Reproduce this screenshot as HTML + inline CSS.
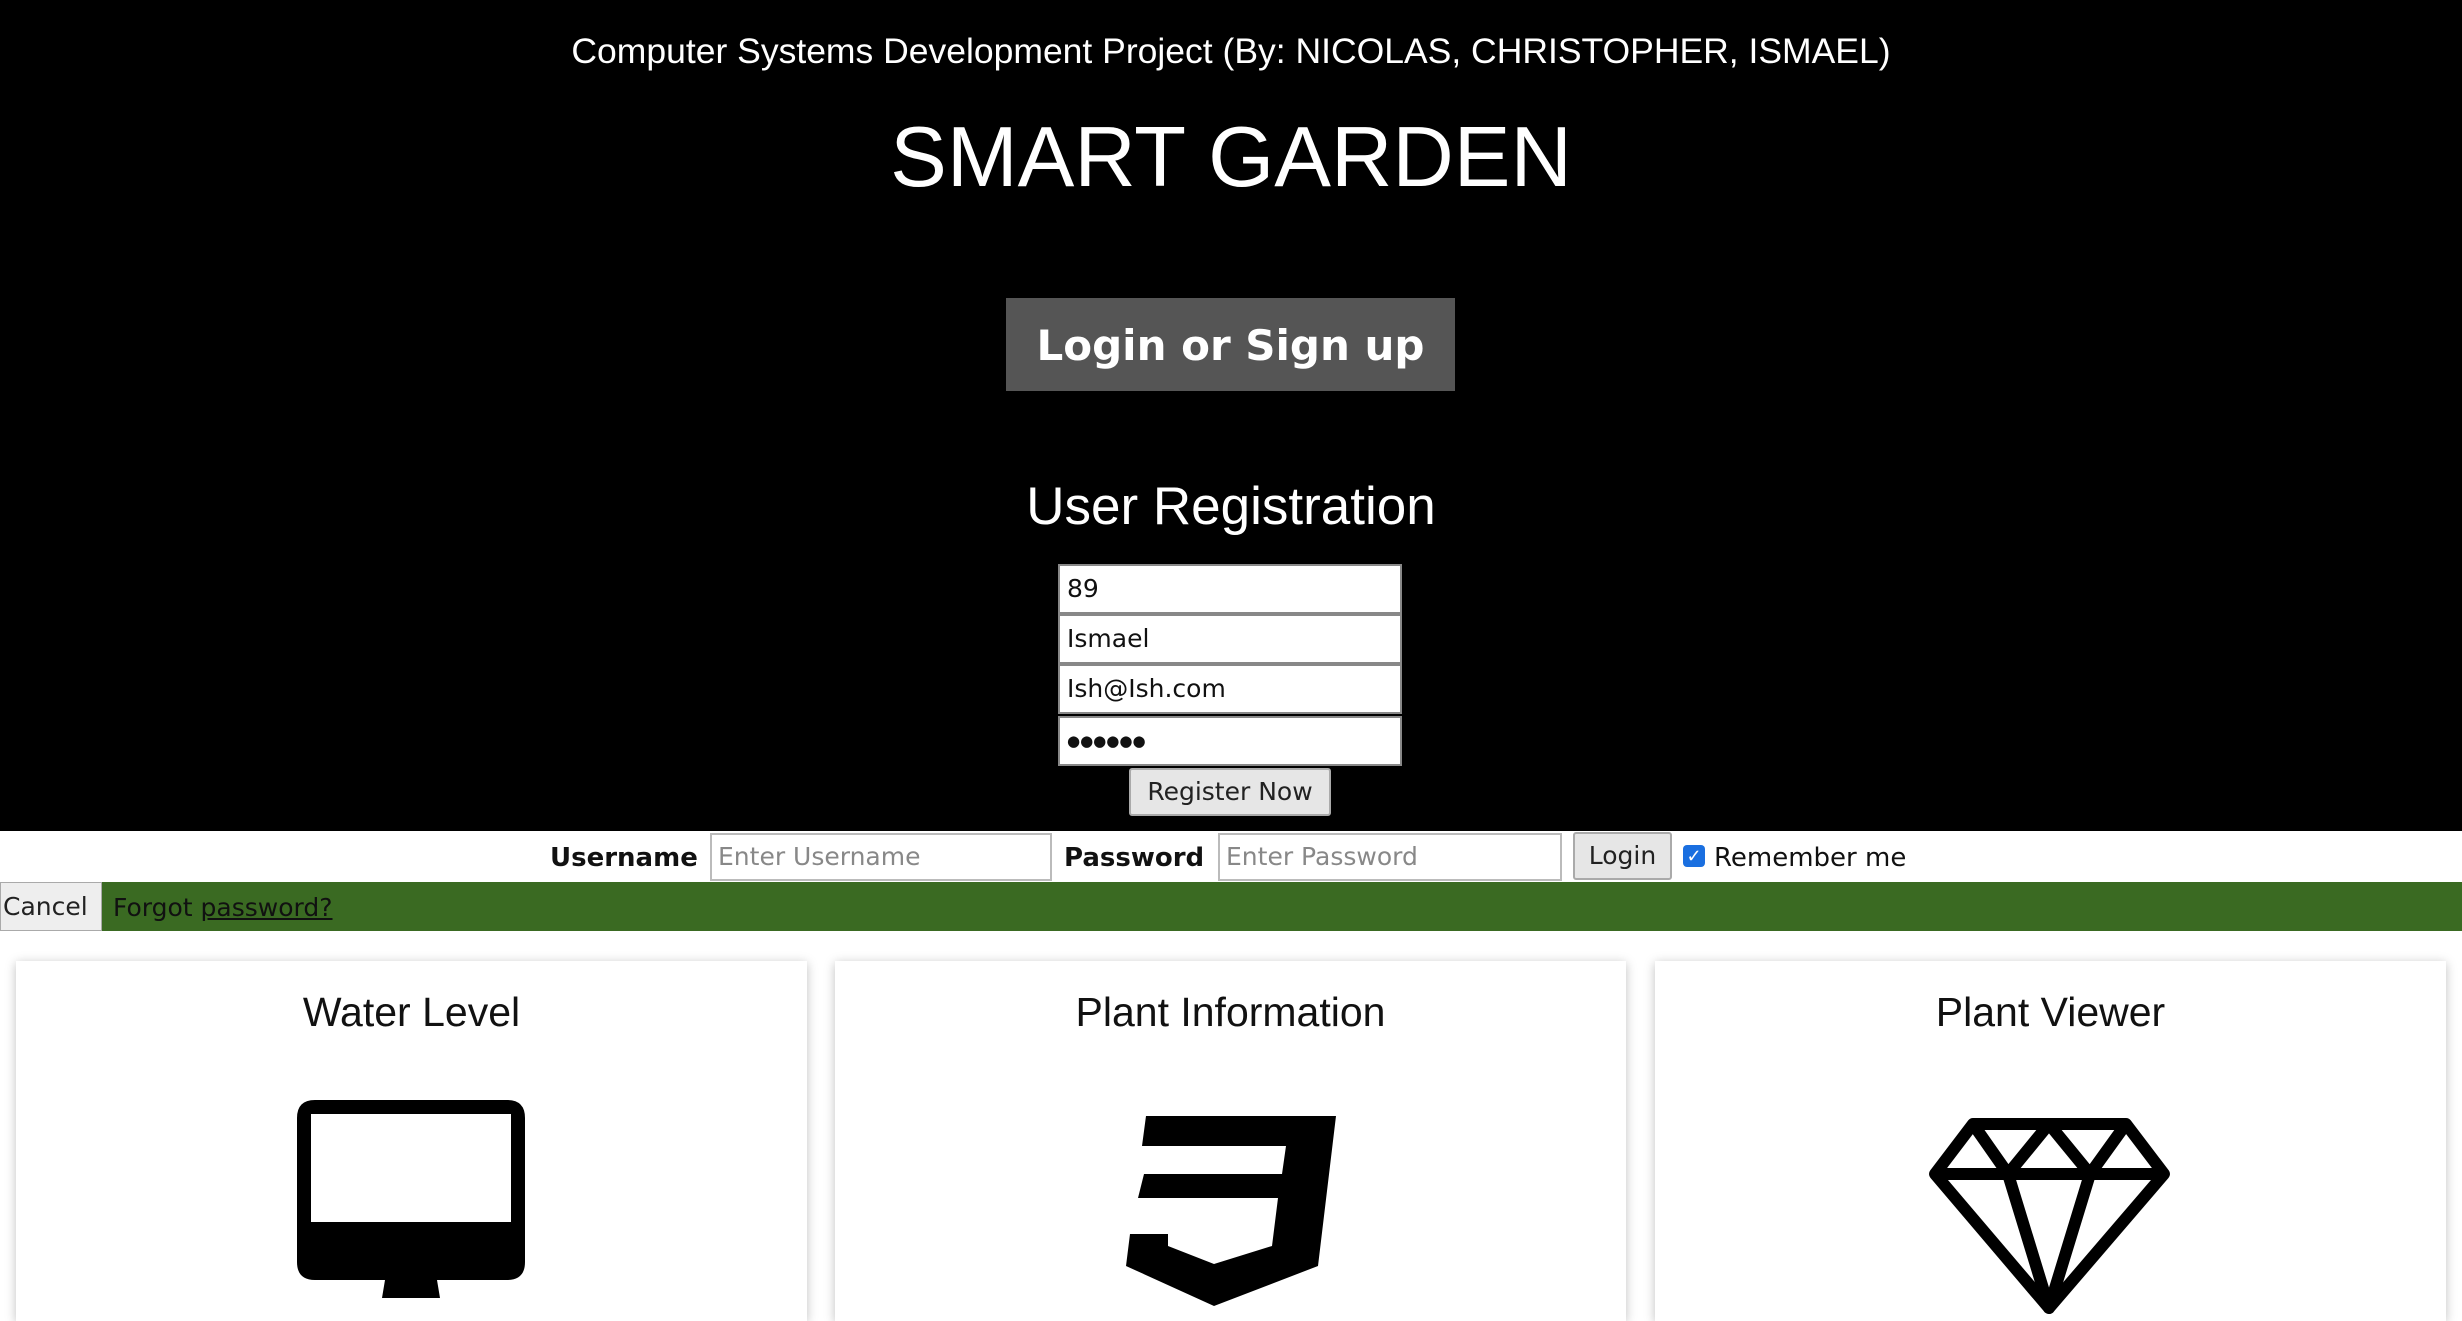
<!DOCTYPE html>
<html><head><style>
*{box-sizing:border-box;margin:0;padding:0}
body{width:2462px;height:1312px;overflow:hidden;background:#fff;font-family:"Liberation Sans",sans-serif;position:relative}
.abs{position:absolute}
#top{left:0;top:0;width:2462px;height:831px;background:#000}
.c{left:0;width:2462px;text-align:center;color:#fff}
.inp{position:absolute;left:1058px;width:344px;height:50px;background:#fff;border:2px solid #888;font-family:"DejaVu Sans",sans-serif;font-size:25px;color:#111;padding-left:7px;line-height:46px}
.card{position:absolute;top:961px;width:791px;height:360px;background:#fff;box-shadow:0 2px 10px rgba(0,0,0,.25)}
.card h2{font-weight:normal;font-size:41px;text-align:center;margin-top:28px;color:#111}
.lbl{font-family:"DejaVu Sans",sans-serif;font-weight:bold;font-size:26px;color:#111;top:843px}
.fi{top:833px;height:48px;background:#fff;border:2px solid #bbb;font-family:"DejaVu Sans",sans-serif;font-size:25px;color:#888;padding-left:6px;line-height:44px}
</style></head><body>
<div id="top" class="abs"></div>
<div class="abs c" style="top:31px;font-size:35.5px">Computer Systems Development Project (By: NICOLAS, CHRISTOPHER, ISMAEL)</div>
<div class="abs c" style="top:108px;font-size:85px;line-height:100px">SMART GARDEN</div>
<div class="abs" style="left:1006px;top:298px;width:449px;height:93px;background:#555;color:#fff;font-family:'DejaVu Sans',sans-serif;font-weight:bold;font-size:42px;text-align:center;line-height:95px">Login or Sign up</div>
<div class="abs c" style="top:476px;font-size:53px">User Registration</div>
<div class="inp" style="top:564px">89</div>
<div class="inp" style="top:614px">Ismael</div>
<div class="inp" style="top:664px">Ish@Ish.com</div>
<div class="inp" style="top:716px;font-size:15px;letter-spacing:0px">●●●●●●</div>
<div class="abs" style="left:1129px;top:768px;width:202px;height:48px;background:#e6e6e6;border:2px solid #aaa;border-radius:3px;font-family:'DejaVu Sans',sans-serif;font-size:25px;text-align:center;line-height:44px;color:#222">Register Now</div>
<div class="abs lbl" style="left:550px">Username</div>
<div class="abs fi" style="left:710px;width:342px">Enter Username</div>
<div class="abs lbl" style="left:1064px">Password</div>
<div class="abs fi" style="left:1218px;width:344px">Enter Password</div>
<div class="abs" style="left:1573px;top:832px;width:99px;height:48px;background:#e6e6e6;border:2px solid #aaa;border-radius:3px;font-family:'DejaVu Sans',sans-serif;font-size:25px;text-align:center;line-height:44px;color:#222">Login</div>
<div class="abs" style="left:1683px;top:845px;width:22px;height:22px;background:#1a6fe0;border-radius:4px;color:#fff;font-size:18px;line-height:22px;text-align:center">✓</div>
<div class="abs" style="left:1714px;top:843px;font-family:'DejaVu Sans',sans-serif;font-size:26px;color:#111">Remember me</div>
<div class="abs" style="left:0;top:882px;width:2462px;height:49px;background:#3a6a22"></div>
<div class="abs" style="left:0;top:882px;width:102px;height:49px;background:#eee;border:1px solid #aaa;font-family:'DejaVu Sans',sans-serif;font-size:25px;line-height:47px;padding-left:2px;color:#222">Cancel</div>
<div class="abs" style="left:113px;top:893px;font-family:'DejaVu Sans',sans-serif;font-size:25px;color:#111">Forgot <u>password?</u></div>
<div class="card" style="left:16px"><h2>Water Level</h2>
<svg class="abs" style="left:281px;top:139px" width="228" height="200" viewBox="0 0 228 200"><path d="M18 0H210Q228 0 228 18V162Q228 180 210 180H140L143 198H85L88 180H18Q0 180 0 162V18Q0 0 18 0ZM14 14V122H214V14Z" fill="#000" fill-rule="evenodd"/></svg></div>
<div class="card" style="left:835px"><h2>Plant Information</h2>
<svg class="abs" style="left:291px;top:155px" width="210" height="192" viewBox="0 0 210 192"><path d="M20 0H210L192 150L88 190L0 150L4 118H42L42 130L88 148L146 130L152 82H12L18 58H156L160 30H16Z" fill="#000"/></svg></div>
<div class="card" style="left:1655px"><h2>Plant Viewer</h2>
<svg class="abs" style="left:273px;top:155px" width="243" height="200" viewBox="0 0 243 200"><g fill="none" stroke="#000" stroke-width="12" stroke-linejoin="round"><path d="M45 8H198L236 58L121 192L7 58Z"/><path d="M7 58H236M45 8L80 58L121 192L162 58L198 8M80 58L121 8L162 58"/></g></svg></div>
</body></html>
